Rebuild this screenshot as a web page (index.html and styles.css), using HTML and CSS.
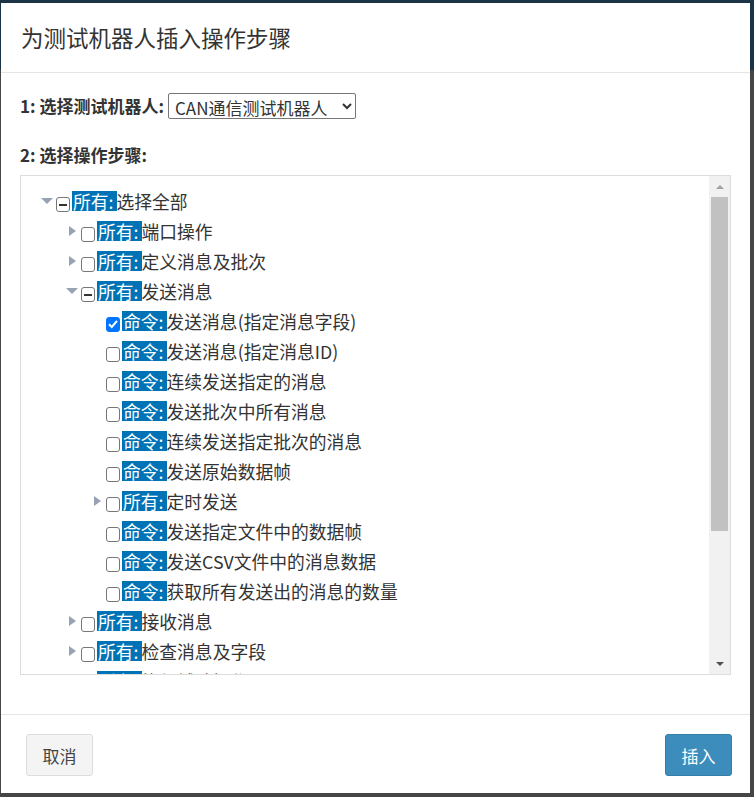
FILE: index.html
```html
<!DOCTYPE html>
<html lang="zh">
  <head>
    <meta charset="UTF-8" />
    <meta name="viewport" content="width=device-width, initial-scale=1.0" />
    <title>为测试机器人插入操作步骤</title>
    <link rel="stylesheet" href="styles.css">
  </head>
  <body>
    <div class="modal">
      <!-- 标题 -->
      <div class="modal-header">
        <h4 class="modal-title">为测试机器人插入操作步骤</h4>
      </div>

      <div class="modal-body">
        <div class="robot-row">
          <label class="field-label">1: 选择测试机器人:</label>
          <select class="robot-select">
            <option>CAN通信测试机器人</option>
          </select>
        </div>

        <label class="field-label step-label">2: 选择操作步骤:</label>

        <div class="tree-box">
          <div class="tree">
            <div class="node lv0"><span class="toggle open"></span><span class="cb part"></span><span class="tag">所有:</span><span class="txt">选择全部</span></div>
            <div class="node lv1"><span class="toggle closed"></span><span class="cb"></span><span class="tag">所有:</span><span class="txt">端口操作</span></div>
            <div class="node lv1"><span class="toggle closed"></span><span class="cb"></span><span class="tag">所有:</span><span class="txt">定义消息及批次</span></div>
            <div class="node lv1"><span class="toggle open"></span><span class="cb part"></span><span class="tag">所有:</span><span class="txt">发送消息</span></div>
            <div class="node lv2"><span class="toggle"></span><span class="cb on"><svg viewBox="0 0 14 14" width="14" height="14"><path d="M3 7.2 L5.8 10 L11 3.8" fill="none" stroke="#fff" stroke-width="2"/></svg></span><span class="tag">命令:</span><span class="txt">发送消息(指定消息字段)</span></div>
            <div class="node lv2"><span class="toggle"></span><span class="cb"></span><span class="tag">命令:</span><span class="txt">发送消息(指定消息ID)</span></div>
            <div class="node lv2"><span class="toggle"></span><span class="cb"></span><span class="tag">命令:</span><span class="txt">连续发送指定的消息</span></div>
            <div class="node lv2"><span class="toggle"></span><span class="cb"></span><span class="tag">命令:</span><span class="txt">发送批次中所有消息</span></div>
            <div class="node lv2"><span class="toggle"></span><span class="cb"></span><span class="tag">命令:</span><span class="txt">连续发送指定批次的消息</span></div>
            <div class="node lv2"><span class="toggle"></span><span class="cb"></span><span class="tag">命令:</span><span class="txt">发送原始数据帧</span></div>
            <div class="node lv2"><span class="toggle closed"></span><span class="cb"></span><span class="tag">所有:</span><span class="txt">定时发送</span></div>
            <div class="node lv2"><span class="toggle"></span><span class="cb"></span><span class="tag">命令:</span><span class="txt">发送指定文件中的数据帧</span></div>
            <div class="node lv2"><span class="toggle"></span><span class="cb"></span><span class="tag">命令:</span><span class="txt">发送CSV文件中的消息数据</span></div>
            <div class="node lv2"><span class="toggle"></span><span class="cb"></span><span class="tag">命令:</span><span class="txt">获取所有发送出的消息的数量</span></div>
            <div class="node lv1"><span class="toggle closed"></span><span class="cb"></span><span class="tag">所有:</span><span class="txt">接收消息</span></div>
            <div class="node lv1"><span class="toggle closed"></span><span class="cb"></span><span class="tag">所有:</span><span class="txt">检查消息及字段</span></div>
            <div class="node lv1"><span class="toggle closed"></span><span class="cb"></span><span class="tag">所有:</span><span class="txt">执行辅助操作</span></div>
          </div>
          <!-- 滚动条 -->
          <div class="scrollbar">
            <div class="sb-btn"><span class="sb-up"></span></div>
            <div class="sb-thumb"></div>
            <div class="sb-rest"></div>
            <div class="sb-btn"><span class="sb-down"></span></div>
          </div>
        </div>
      </div>

      <div class="modal-footer">
        <button class="btn btn-default">取消</button>
        <button class="btn btn-primary">插入</button>
      </div>
    </div>
  </body>
</html>
```

FILE: styles.css
```css
body {
  margin: 0;
  background: linear-gradient(#1b3446 0, #1b3446 70px, #464646 70px);
  font-family: 'Noto Sans CJK SC', 'Liberation Sans', sans-serif;
  color: #333;
  height: 797px;
  overflow: hidden;
}

/* --- 对话框 --- */
.modal {
  margin: 3px 4px 0 1px;
  height: 790px;
  background: #fff;
  display: flex;
  flex-direction: column;
}

.modal-header {
  padding: 18px 20px;
  border-bottom: 1px solid #e5e5e5;
}

.modal-title {
  margin: 0;
  font-size: 22.5px;
  font-weight: normal;
  line-height: 33px;
  color: #333;
}

.modal-body {
  flex: 1;
  padding: 20px 19px 0 19px;
}

.robot-row {
  display: flex;
  align-items: center;
  gap: 4px;
  height: 26px;
  margin-bottom: 24px;
}

.field-label {
  font-size: 17px;
  font-weight: bold;
  line-height: 24px;
  color: #333;
}

.step-label {
  display: block;
  height: 24px;
  margin-bottom: 8px;
}

.robot-select {
  width: 188px;
  height: 26px;
  font-family: inherit;
  font-size: 17px;
  color: #333;
  background: #fff;
  border: 1px solid #767676;
  border-radius: 2px;
  padding: 0 2px;
}

/* --- 步骤树 --- */
.tree-box {
  display: flex;
  height: 500px;
  box-sizing: border-box;
  border: 1px solid #ddd;
  overflow: hidden;
}

.tree {
  flex: 1;
  padding-top: 10px;
  overflow: hidden;
}

.node {
  display: flex;
  align-items: center;
  height: 30px;
  white-space: nowrap;
  font-size: 17.8px;
}

.lv0 { padding-left: 17px; }
.lv1 { padding-left: 42px; }
.lv2 { padding-left: 67px; }

.toggle {
  width: 18px;
  height: 20px;
  flex: none;
  display: flex;
  align-items: center;
  justify-content: center;
}

.toggle.open::before {
  content: '';
  border-left: 6px solid transparent;
  border-right: 6px solid transparent;
  border-top: 6px solid #97a2b3;
}

.toggle.closed::before {
  content: '';
  border-top: 5.5px solid transparent;
  border-bottom: 5.5px solid transparent;
  border-left: 7px solid #97a2b3;
}

.cb {
  width: 14px;
  height: 15px;
  flex: none;
  box-sizing: border-box;
  border: 1px solid #767676;
  border-radius: 3px;
  margin: 7px 2px 0 0;
  background: #fff;
  position: relative;
}

.cb.part::after {
  content: '';
  position: absolute;
  left: 2px;
  right: 2px;
  top: 6px;
  height: 1.5px;
  background: #333;
}

.cb.on {
  background: #0075ff;
  border-color: #0075ff;
}

.cb.on svg {
  position: absolute;
  left: -1px;
  top: -1px;
}

.tag {
  background: #0073b7;
  color: #fff;
  line-height: 20px;
  height: 20px;
  padding: 0 3px 0 1px;
}

.txt {
  line-height: 20px;
  color: #333;
}

/* 滚动条 */
.scrollbar {
  width: 21px;
  flex: none;
  background: #f1f1f1;
  display: flex;
  flex-direction: column;
}

.sb-btn {
  height: 21px;
  display: flex;
  align-items: center;
  justify-content: center;
}

.sb-up {
  border-left: 4px solid transparent;
  border-right: 4px solid transparent;
  border-bottom: 4px solid #a3a3a3;
}

.sb-down {
  border-left: 4px solid transparent;
  border-right: 4px solid transparent;
  border-top: 4px solid #505050;
}

.sb-thumb {
  height: 334px;
  margin: 0 2px;
  background: #c1c1c1;
}

.sb-rest {
  flex: 1;
}

/* --- 底部按钮 --- */
.modal-footer {
  border-top: 1px solid #e5e5e5;
  padding: 19px 18px 17px 25px;
  display: flex;
  justify-content: space-between;
}

.btn {
  width: 67px;
  height: 42px;
  font-family: inherit;
  font-size: 17px;
  border-radius: 3px;
  border: 1px solid;
  cursor: pointer;
}

.btn-default {
  background: #f4f4f4;
  border-color: #ddd;
  color: #444;
}

.btn-primary {
  background: #3c8dbc;
  border-color: #367fa9;
  color: #fff;
}
```
